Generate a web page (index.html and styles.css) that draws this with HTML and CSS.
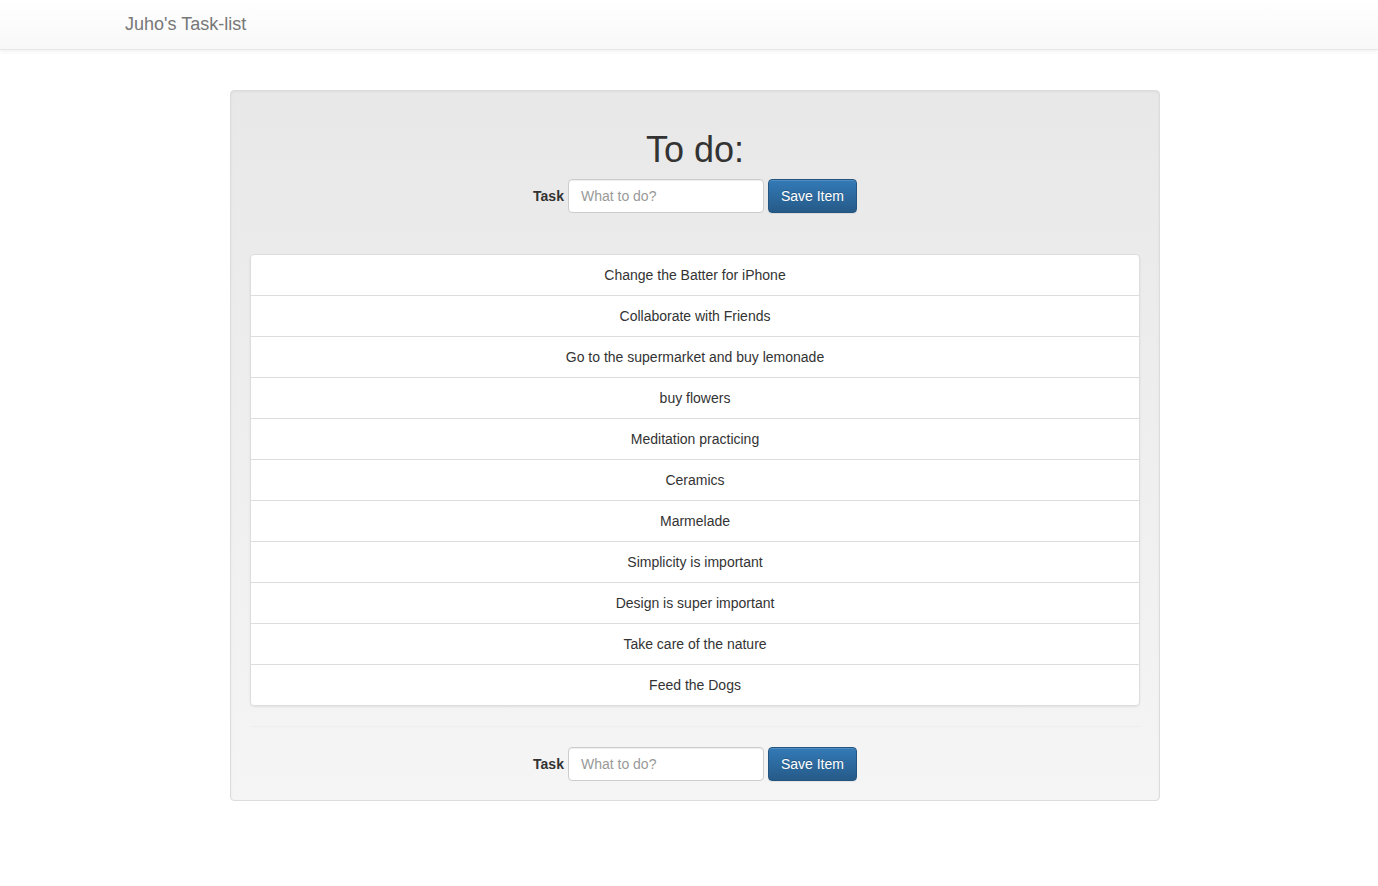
FILE: index.html
```html
<!DOCTYPE html>
<html lang="en">
<head>
<meta charset="utf-8">
<title>Juho's Task-list</title>
<link rel="stylesheet" href="styles.css">
</head>
<body>
<nav class="navbar">
  <span class="brand">Juho's Task-list</span>
</nav>
<main class="well">
  <h1 class="title">To do:</h1>
  <form class="task-form">
    <label class="task-label">Task</label>
    <input class="task-input" type="text" placeholder="What to do?">
    <button class="btn-save" type="button">Save Item</button>
  </form>
  <ul class="list-group">
    <li class="list-item">Change the Batter for iPhone</li>
    <li class="list-item">Collaborate with Friends</li>
    <li class="list-item">Go to the supermarket and buy lemonade</li>
    <li class="list-item">buy flowers</li>
    <li class="list-item">Meditation practicing</li>
    <li class="list-item">Ceramics</li>
    <li class="list-item">Marmelade</li>
    <li class="list-item">Simplicity is important</li>
    <li class="list-item">Design is super important</li>
    <li class="list-item">Take care of the nature</li>
    <li class="list-item">Feed the Dogs</li>
  </ul>
  <hr class="divider">
  <form class="task-form">
    <label class="task-label">Task</label>
    <input class="task-input" type="text" placeholder="What to do?">
    <button class="btn-save" type="button">Save Item</button>
  </form>
</main>
</body>
</html>
```
FILE: styles.css
```css
* { box-sizing: border-box; }
html, body { margin: 0; padding: 0; }
body {
  font-family: "Liberation Sans", Arial, Helvetica, sans-serif;
  font-size: 14px;
  line-height: 20px;
  color: #333;
  background: #fff;
}
.navbar {
  height: 50px;
  background-image: linear-gradient(to bottom, #fff 0, #f8f8f8 100%);
  border-bottom: 1px solid #e7e7e7;
  box-shadow: inset 0 1px 0 rgba(255,255,255,.15), 0 1px 5px rgba(0,0,0,.075);
  padding-left: 125px;
  display: flex;
  align-items: center;
}
.brand {
  font-size: 18px;
  line-height: 20px;
  color: #777;
  padding-bottom: 2px;
}
.well {
  display: block;
  width: 930px;
  margin: 40px 0 0 230px;
  padding: 19px;
  border: 1px solid #dcdcdc;
  border-radius: 4px;
  background-image: linear-gradient(to bottom, #e8e8e8 0, #f5f5f5 100%);
  box-shadow: inset 0 1px 3px rgba(0,0,0,.05), 0 1px 0 rgba(255,255,255,.1);
}
.title {
  margin: 20px 0 9px;
  font-size: 36px;
  font-weight: normal;
  line-height: 40px;
  text-align: center;
}
.task-form {
  display: flex;
  justify-content: center;
  align-items: center;
  gap: 4px;
}
.task-label {
  font-weight: bold;
}
.task-input {
  width: 196px;
  height: 34px;
  padding: 6px 12px;
  font: inherit;
  color: #555;
  background: #fff;
  border: 1px solid #ccc;
  border-radius: 4px;
  box-shadow: inset 0 1px 1px rgba(0,0,0,.075);
}
.task-input::placeholder { color: #999; }
.btn-save {
  height: 34px;
  padding: 6px 12px;
  font: inherit;
  color: #fff;
  background-image: linear-gradient(to bottom, #337ab7 0, #265a88 100%);
  border: 1px solid #245580;
  border-radius: 4px;
  text-shadow: 0 -1px 0 rgba(0,0,0,.2);
  box-shadow: inset 0 1px 0 rgba(255,255,255,.15), 0 1px 1px rgba(0,0,0,.075);
}
.list-group {
  list-style: none;
  margin: 41px 0 0;
  padding: 0;
  border-radius: 4px;
  box-shadow: 0 1px 2px rgba(0,0,0,.075);
}
.list-item {
  padding: 10px 15px;
  margin-bottom: -1px;
  background: #fff;
  border: 1px solid #ddd;
  text-align: center;
}
.list-item:first-child { border-radius: 4px 4px 0 0; }
.list-item:last-child { border-radius: 0 0 4px 4px; margin-bottom: 0; }
.divider {
  margin: 20px 0;
  border: 0;
  border-top: 1px solid #eee;
}
```
